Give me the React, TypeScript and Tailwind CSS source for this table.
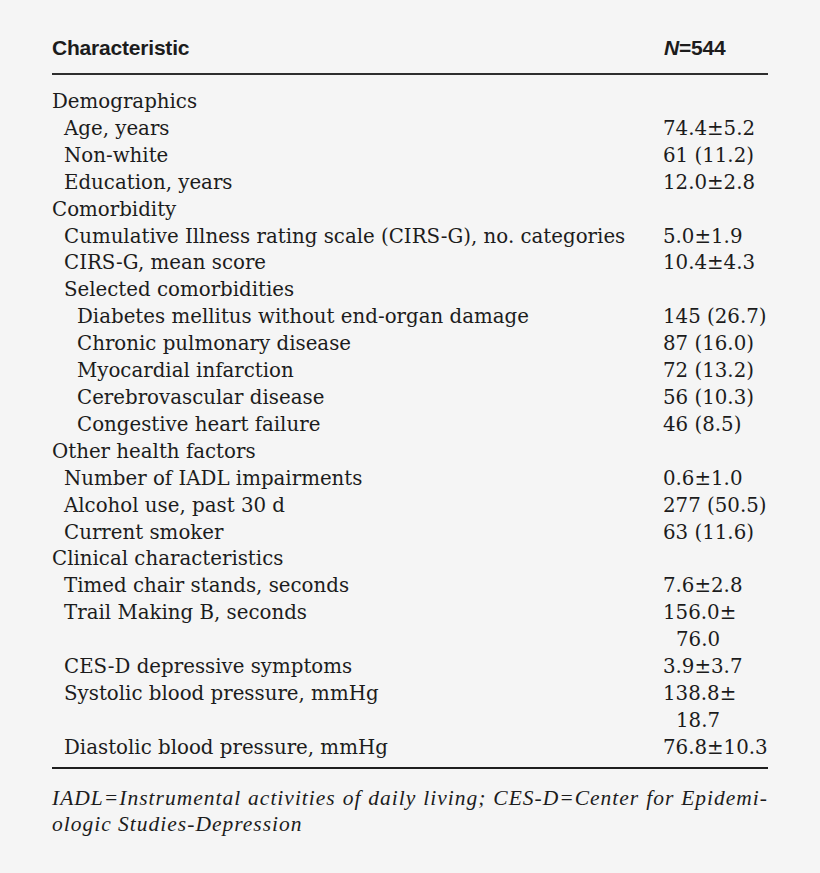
type Row = {
  label: string;
  indent?: 0 | 1 | 2;
  value?: string[];
};

const rows: Row[] = [
  { label: 'Demographics' },
  { label: 'Age, years', indent: 1, value: ['74.4±5.2'] },
  { label: 'Non-white', indent: 1, value: ['61 (11.2)'] },
  { label: 'Education, years', indent: 1, value: ['12.0±2.8'] },
  { label: 'Comorbidity' },
  { label: 'Cumulative Illness rating scale (CIRS-G), no. categories', indent: 1, value: ['5.0±1.9'] },
  { label: 'CIRS-G, mean score', indent: 1, value: ['10.4±4.3'] },
  { label: 'Selected comorbidities', indent: 1 },
  { label: 'Diabetes mellitus without end-organ damage', indent: 2, value: ['145 (26.7)'] },
  { label: 'Chronic pulmonary disease', indent: 2, value: ['87 (16.0)'] },
  { label: 'Myocardial infarction', indent: 2, value: ['72 (13.2)'] },
  { label: 'Cerebrovascular disease', indent: 2, value: ['56 (10.3)'] },
  { label: 'Congestive heart failure', indent: 2, value: ['46 (8.5)'] },
  { label: 'Other health factors' },
  { label: 'Number of IADL impairments', indent: 1, value: ['0.6±1.0'] },
  { label: 'Alcohol use, past 30 d', indent: 1, value: ['277 (50.5)'] },
  { label: 'Current smoker', indent: 1, value: ['63 (11.6)'] },
  { label: 'Clinical characteristics' },
  { label: 'Timed chair stands, seconds', indent: 1, value: ['7.6±2.8'] },
  { label: 'Trail Making B, seconds', indent: 1, value: ['156.0±', '76.0'] },
  { label: 'CES-D depressive symptoms', indent: 1, value: ['3.9±3.7'] },
  { label: 'Systolic blood pressure, mmHg', indent: 1, value: ['138.8±', '18.7'] },
  { label: 'Diastolic blood pressure, mmHg', indent: 1, value: ['76.8±10.3'] },
];

const indentClass = ['pl-0', 'pl-[12px]', 'pl-[25px]'];

export default function App() {
  return (
    <div className="min-h-[873px] w-full bg-[#f5f5f5] px-[52px] pt-[34px] text-[#1c1c1c]">
      {/* header */}
      <div className="grid grid-cols-[611px_1fr] font-['Liberation_Sans',Arial,sans-serif] text-[21px] font-bold leading-[27px] tracking-[-0.2px]">
        <div>Characteristic</div>
        <div className="pl-[1px]">
          <span className="italic">N</span>=544
        </div>
      </div>
      <div className="mt-[12px] h-[2px] bg-[#2e2e2e]" />

      {/* body */}
      <div className="mt-[14px] font-['DejaVu_Serif',serif] text-[19.8px] leading-[26.9px]">
        {rows.map((r, i) => (
          <div key={i} className="grid grid-cols-[611px_1fr]">
            <div className={indentClass[r.indent ?? 0]}>{r.label}</div>
            <div>
              {(r.value || []).map((v, j) => (
                <div key={j} className={j > 0 ? 'pl-[13px]' : ''}>
                  {v}
                </div>
              ))}
            </div>
          </div>
        ))}
      </div>
      <div className="mt-[5px] h-[2px] bg-[#1e1e1e]" />

      {/* footnote */}
      <div className="mt-[16px] font-['Liberation_Serif',serif] text-[21.5px] italic leading-[26px] tracking-[1px]">
        <div className="text-justify [text-align-last:justify]">
          IADL=Instrumental activities of daily living; CES-D=Center for Epidemi-
        </div>
        <div>ologic Studies-Depression</div>
      </div>
    </div>
  );
}
